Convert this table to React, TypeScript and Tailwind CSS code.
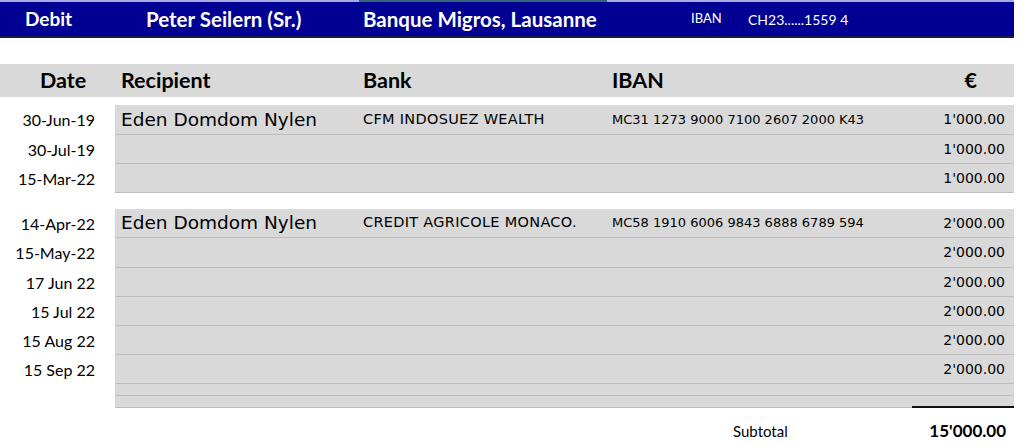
import React from "react";

const CAL = "font-['Lato','Open_Sans',sans-serif]";
const VER = "font-['DejaVu_Sans','Verdana',sans-serif]";

type Row = { date?: string; recipient?: string; bank?: string; iban?: string; amount?: string; h: string };

const group1: Row[] = [
  { date: "30-Jun-19", recipient: "Eden Domdom Nylen", bank: "CFM INDOSUEZ WEALTH", iban: "MC31 1273 9000 7100 2607 2000 K43", amount: "1'000.00", h: "h-[30px]" },
  { date: "30-Jul-19", amount: "1'000.00", h: "h-[29px]" },
  { date: "15-Mar-22", amount: "1'000.00", h: "h-[29px]" },
];

const group2: Row[] = [
  { date: "14-Apr-22", recipient: "Eden Domdom Nylen", bank: "CREDIT AGRICOLE MONACO.", iban: "MC58 1910 6006 9843 6888 6789 594", amount: "2'000.00", h: "h-[29px]" },
  { date: "15-May-22", amount: "2'000.00", h: "h-[30px]" },
  { date: "17 Jun 22", amount: "2'000.00", h: "h-[29px]" },
  { date: "15 Jul 22", amount: "2'000.00", h: "h-[29px]" },
  { date: "15 Aug 22", amount: "2'000.00", h: "h-[29px]" },
  { date: "15 Sep 22", amount: "2'000.00", h: "h-[29px]" },
  { h: "h-[12px]" },
  { h: "h-[12px]" },
];

function DataRow({ r }: { r: Row }) {
  return (
    <div className={`flex ${r.h}`}>
      <div className={`w-[115px] shrink-0 pr-[20px] text-right text-[16px] text-black ${CAL} flex items-center justify-end`}>
        {r.date}
      </div>
      <div className="flex-1 bg-[#d9d9d9] border-b border-[#bdbdbd] flex items-center text-black whitespace-nowrap">
        <div className={`w-[248px] shrink-0 pl-[6px] text-[18.5px] ${VER}`}>{r.recipient}</div>
        <div className={`w-[249px] shrink-0 text-[14.5px] tracking-[0.3px] ${VER}`}>{r.bank}</div>
        <div className={`flex-1 text-[13px] ${VER}`}>{r.iban}</div>
        <div className={`pr-[9px] text-[14px] ${VER}`}>{r.amount}</div>
      </div>
    </div>
  );
}

export default function App() {
  return (
    <div className="w-[1024px] h-[444px] bg-white overflow-hidden">
      <div className="w-[1014px]">
        <div className="flex h-[2px]">
          <div className="w-[359px] bg-[#a9a9e4]" />
          <div className="w-[248px] bg-[#34667a]" />
          <div className="flex-1 bg-[#a9a9e4]" />
        </div>
        <div className={`h-[34px] bg-[#000093] flex items-center text-white whitespace-nowrap ${CAL}`}>
          <div className="w-[146px] shrink-0 pl-[25px] text-[19px] font-bold">Debit</div>
          <div className="w-[217px] shrink-0 text-[20.5px] font-bold">Peter Seilern (Sr.)</div>
          <div className="w-[328px] shrink-0 text-[20.5px] font-bold">Banque Migros, Lausanne</div>
          <div className="w-[57px] shrink-0 text-[13px]">IBAN</div>
          <div className="text-[14px]">CH23......1559 4</div>
        </div>
        <div className="h-[2px] bg-[#1b1b45]" />

        <div className={`mt-[26px] h-[33px] bg-[#d9d9d9] flex items-center text-black font-bold text-[21.5px] ${CAL}`}>
          <div className="w-[121px] shrink-0 pl-[40px]">Date</div>
          <div className="w-[242px] shrink-0">Recipient</div>
          <div className="w-[249px] shrink-0">Bank</div>
          <div className="flex-1">IBAN</div>
          <div className="pr-[37px]">€</div>
        </div>

        <div className="mt-[8px]">
          {group1.map((r, i) => (
            <DataRow key={i} r={r} />
          ))}
        </div>

        <div className="mt-[16px]">
          {group2.map((r, i) => (
            <DataRow key={i} r={r} />
          ))}
        </div>

        <div className="flex justify-end -mt-[2px]">
          <div className="w-[102px] h-[2px] bg-[#111]" />
        </div>

        <div className={`flex items-center h-[34px] pt-[12px] text-black ${CAL}`}>
          <div className="w-[733px] shrink-0" />
          <div className="flex-1 text-[15px]">Subtotal</div>
          <div className="pr-[8px] text-[17px] font-bold">15'000.00</div>
        </div>
      </div>
    </div>
  );
}
